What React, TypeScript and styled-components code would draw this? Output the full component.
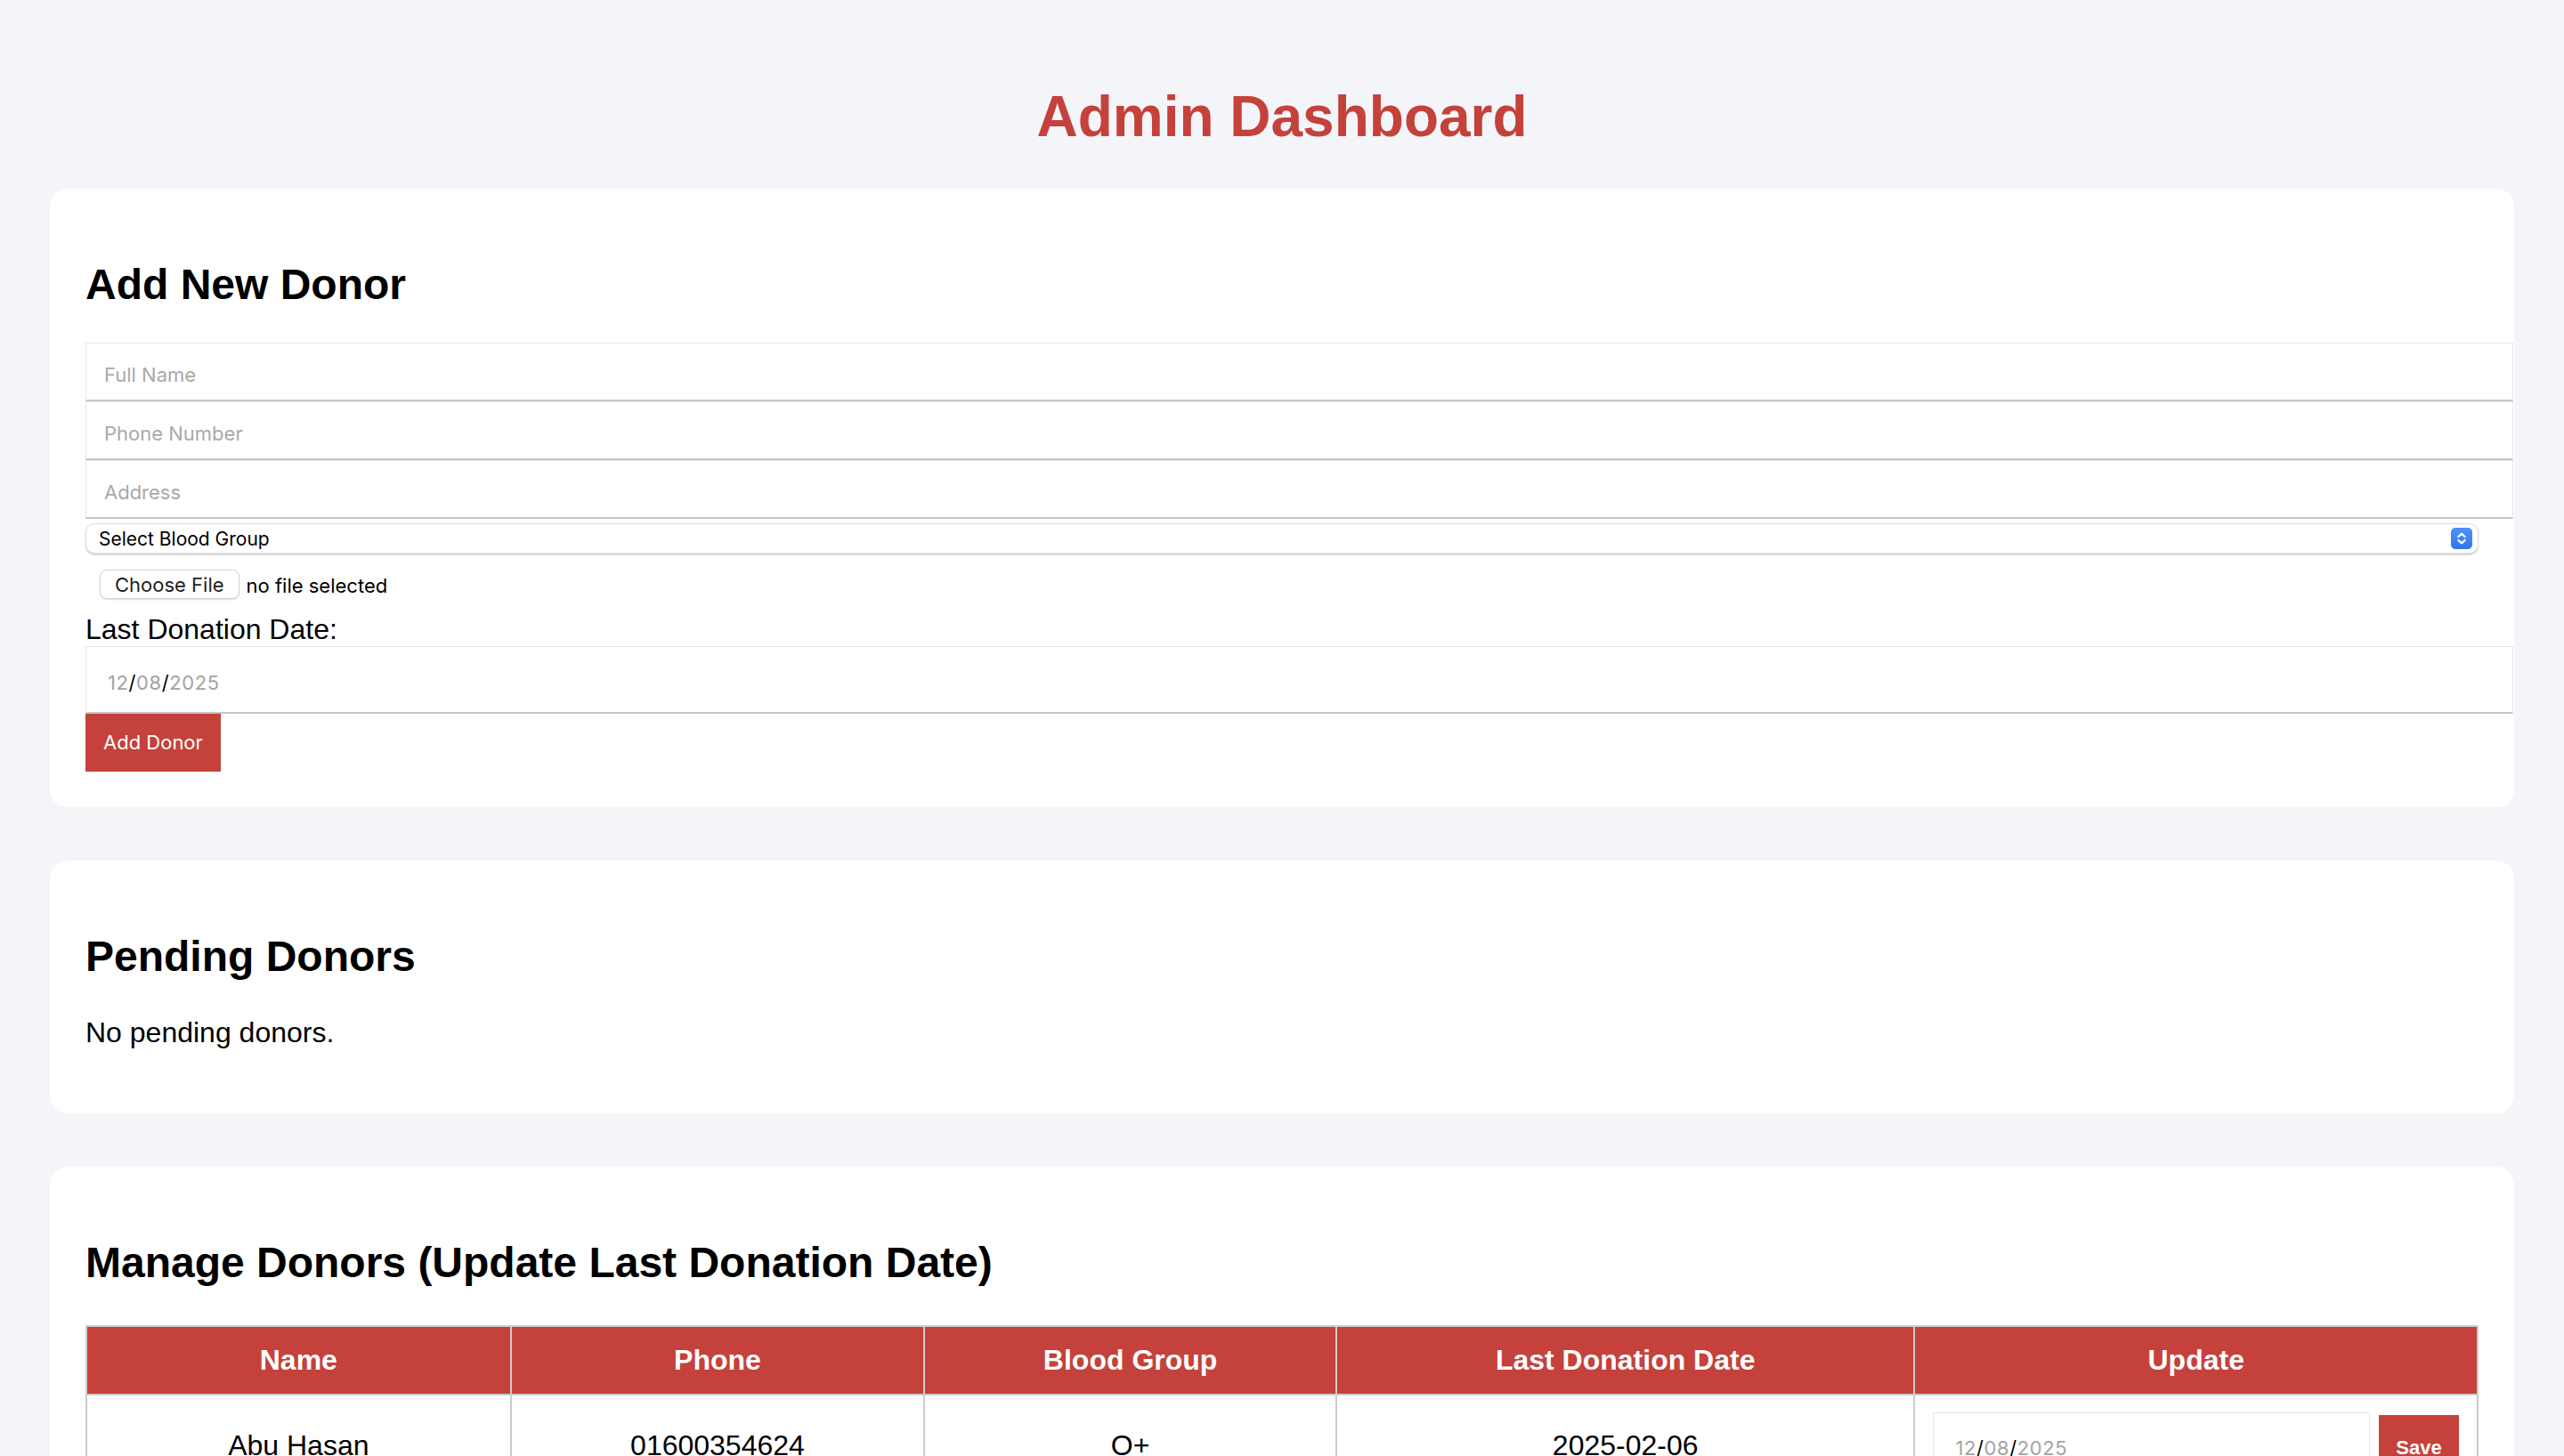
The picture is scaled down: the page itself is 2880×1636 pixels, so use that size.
import React from "react";
import styled, { createGlobalStyle } from "styled-components";

const RED = "#c5413b";
const UI_FONT = `"Inter", "Noto Sans", "Liberation Sans", sans-serif`;

const GlobalStyle = createGlobalStyle`
  html, body { background: #f4f5f9; }
  body {
    margin: 16px;
    font-family: "Liberation Sans", Arial, Helvetica, sans-serif;
    color: #000;
  }
`;

const Page = styled.div`
  padding: 40px;
`;

const Title = styled.h1`
  margin: 38px 0 44px;
  text-align: center;
  color: ${RED};
  font-size: 64px;
  line-height: 74px;
  font-weight: 700;
`;

const CardStack = styled.div`
  display: flex;
  flex-direction: column;
  gap: 60px;
`;

const Card = styled.section`
  background: #ffffff;
  border-radius: 20px;
  padding: 40px;
`;

const SectionTitle = styled.h2`
  margin: 40px 0 38px;
  font-size: 48px;
  line-height: 55px;
  font-weight: 700;
`;

const Form = styled.form`
  display: flex;
  flex-direction: column;
  align-items: flex-start;
`;

const TextInput = styled.input`
  box-sizing: border-box;
  display: block;
  width: calc(100% + 39px);
  height: 66px;
  margin: 0;
  padding: 23px 20px 17px;
  font-family: ${UI_FONT};
  font-size: 22px;
  line-height: 23px;
  color: #000;
  background: #fff;
  border: 1px solid #e7e7e7;
  border-bottom: 2px solid #c6c6c6;
  border-radius: 0;
  outline: none;
  &::placeholder {
    color: #a9a9a9;
  }
`;

const SelectBox = styled.div`
  box-sizing: border-box;
  margin-top: 5px;
  width: 100%;
  height: 34px;
  display: flex;
  align-items: center;
  padding: 0 6px 0 14px;
  background: #fff;
  border: 1px solid #dcdcdc;
  border-radius: 10px;
  box-shadow: 0 1.5px 1.5px rgba(0, 0, 0, 0.16);
`;

const NativeSelect = styled.select`
  flex: 1;
  appearance: none;
  -webkit-appearance: none;
  border: none;
  outline: none;
  background: transparent;
  font-family: ${UI_FONT};
  font-size: 21px;
  color: #000;
  padding: 0;
`;

const Stepper = styled.svg`
  width: 24px;
  height: 24px;
  flex: none;
`;

const FileRow = styled.div`
  margin-top: 18px;
  padding-left: 16px;
  display: flex;
  align-items: center;
  gap: 8px;
`;

const FileButton = styled.button`
  box-sizing: border-box;
  height: 33px;
  padding: 0 16px;
  font-family: ${UI_FONT};
  font-size: 22px;
  color: #1e1e1e;
  background: #fff;
  border: 1px solid #d4d4d4;
  border-radius: 8px;
  box-shadow: 0 1px 1.5px rgba(0, 0, 0, 0.14);
`;

const FileStatus = styled.span`
  font-family: ${UI_FONT};
  font-size: 22px;
  color: #000;
  padding-top: 3px;
`;

const FieldLabel = styled.label`
  margin-top: 16px;
  font-size: 32px;
  line-height: 37px;
`;

const DateField = styled.div<{ $fluid?: boolean }>`
  box-sizing: border-box;
  ${(p) => (p.$fluid ? "flex: 1; min-width: 0;" : "width: calc(100% + 39px);")}
  height: 76px;
  display: flex;
  align-items: center;
  padding: 6px 20px 0 24px;
  background: #fff;
  border: 1px solid #e7e7e7;
  border-bottom: 2px solid #c6c6c6;
  font-family: ${UI_FONT};
  font-size: 22px;
  letter-spacing: 0.6px;
`;

const Seg = styled.span<{ $sep?: boolean }>`
  color: ${(p) => (p.$sep ? "#000" : "#a3a3a3")};
`;

const PrimaryButton = styled.button`
  margin: 0;
  padding: 20px 20px;
  font-family: ${UI_FONT};
  font-size: 22px;
  line-height: 25px;
  color: #fff;
  background: ${RED};
  border: none;
  border-radius: 0;
`;

const Message = styled.p`
  margin: 40px 0 32px;
  font-size: 32px;
  line-height: 37px;
`;

const Table = styled.table`
  width: 100%;
  margin-top: 43px;
  border-collapse: collapse;
  table-layout: fixed;
`;

const HeadCell = styled.th`
  padding: 19px 20px;
  background: ${RED};
  color: #fff;
  font-size: 32px;
  line-height: 37px;
  font-weight: 700;
  text-align: center;
  border: 2px solid #cdcdcd;
`;

const Cell = styled.td`
  padding: 18px 20px;
  font-size: 32px;
  line-height: 37px;
  text-align: center;
  vertical-align: middle;
  border: 2px solid #cdcdcd;
`;

const UpdateRow = styled.div`
  display: flex;
  align-items: center;
  gap: 10px;
`;

const SaveButton = styled.button`
  flex: none;
  width: 90px;
  height: 73px;
  padding: 0;
  margin-top: 4px;
  font-family: "Liberation Sans", Arial, sans-serif;
  font-size: 22px;
  font-weight: 700;
  color: #fff;
  background: ${RED};
  border: none;
`;

function DateValue({ fluid }: { fluid?: boolean }) {
  return (
    <DateField $fluid={fluid} role="textbox" aria-label="Last Donation Date">
      <Seg>12</Seg>
      <Seg $sep>/</Seg>
      <Seg>08</Seg>
      <Seg $sep>/</Seg>
      <Seg>2025</Seg>
    </DateField>
  );
}

function StepperIcon() {
  return (
    <Stepper viewBox="0 0 24 24">
      <defs>
        <linearGradient id="stepGrad" x1="0" y1="0" x2="0" y2="1">
          <stop offset="0" stopColor="#4d93f8" />
          <stop offset="1" stopColor="#2f74ee" />
        </linearGradient>
      </defs>
      <rect x="0" y="0" width="24" height="24" rx="5" fill="url(#stepGrad)" />
      <path d="M8.3 10 L12 6.6 L15.7 10" fill="none" stroke="#fff" strokeWidth="2.2" strokeLinecap="round" strokeLinejoin="round" />
      <path d="M8.3 14 L12 17.4 L15.7 14" fill="none" stroke="#fff" strokeWidth="2.2" strokeLinecap="round" strokeLinejoin="round" />
    </Stepper>
  );
}

const donors = [
  { name: "Abu Hasan", phone: "01600354624", group: "O+", last: "2025-02-06" },
  { name: "Rahim Uddin", phone: "01711223344", group: "A+", last: "2024-11-20" },
];

const colWidths = [477, 465, 463, 650, 633];

export default function App() {
  return (
    <>
      <GlobalStyle />
      <Page>
        <Title>Admin Dashboard</Title>
        <CardStack>
          <Card>
            <SectionTitle>Add New Donor</SectionTitle>
            <Form onSubmit={(e) => e.preventDefault()}>
              <TextInput placeholder="Full Name" />
              <TextInput placeholder="Phone Number" />
              <TextInput placeholder="Address" />
              <SelectBox>
                <NativeSelect defaultValue="">
                  <option value="">Select Blood Group</option>
                  <option>A+</option>
                  <option>A-</option>
                  <option>B+</option>
                  <option>B-</option>
                  <option>O+</option>
                  <option>O-</option>
                  <option>AB+</option>
                  <option>AB-</option>
                </NativeSelect>
                <StepperIcon />
              </SelectBox>
              <FileRow>
                <FileButton type="button">Choose File</FileButton>
                <FileStatus>no file selected</FileStatus>
              </FileRow>
              <FieldLabel>Last Donation Date:</FieldLabel>
              <DateValue />
              <PrimaryButton type="submit">Add Donor</PrimaryButton>
            </Form>
          </Card>

          <Card>
            <SectionTitle>Pending Donors</SectionTitle>
            <Message>No pending donors.</Message>
          </Card>

          <Card>
            <SectionTitle>Manage Donors (Update Last Donation Date)</SectionTitle>
            <Table>
              <colgroup>
                {colWidths.map((w, i) => (
                  <col key={i} style={{ width: `${(w / 2688) * 100}%` }} />
                ))}
              </colgroup>
              <thead>
                <tr>
                  <HeadCell>Name</HeadCell>
                  <HeadCell>Phone</HeadCell>
                  <HeadCell>Blood Group</HeadCell>
                  <HeadCell>Last Donation Date</HeadCell>
                  <HeadCell>Update</HeadCell>
                </tr>
              </thead>
              <tbody>
                {donors.map((d) => (
                  <tr key={d.phone}>
                    <Cell>{d.name}</Cell>
                    <Cell>{d.phone}</Cell>
                    <Cell>{d.group}</Cell>
                    <Cell>{d.last}</Cell>
                    <Cell>
                      <UpdateRow>
                        <DateValue fluid />
                        <SaveButton type="button">Save</SaveButton>
                      </UpdateRow>
                    </Cell>
                  </tr>
                ))}
              </tbody>
            </Table>
          </Card>
        </CardStack>
      </Page>
    </>
  );
}
